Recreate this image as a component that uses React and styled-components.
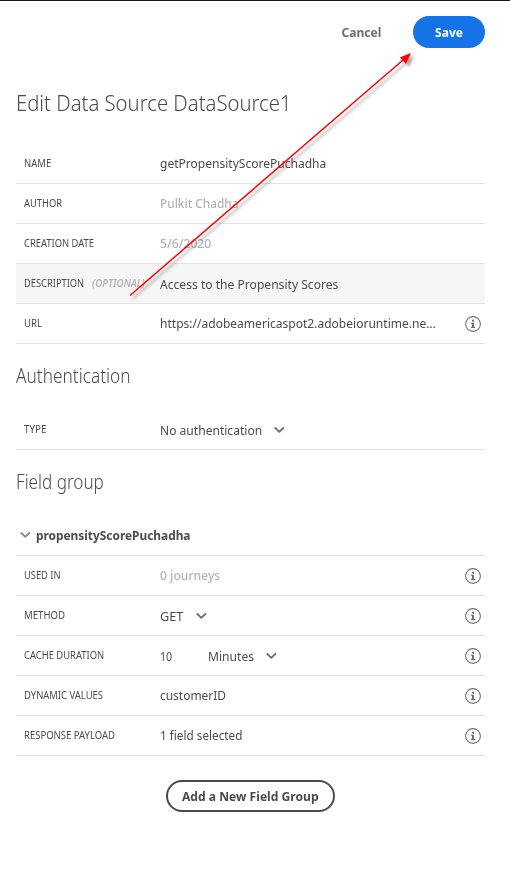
import React from 'react';
import styled, { createGlobalStyle, css } from 'styled-components';

const GlobalStyle = createGlobalStyle`
  * { box-sizing: border-box; }
  body {
    margin: 0;
    background: #fff;
    color: #4b4b4b;
    font-family: "Noto Sans", "Open Sans", sans-serif;
    font-size: 13px;
  }
`;

const Panel = styled.main`
  position: relative;
  width: 510px;
  height: 887px;
  padding: 15px 25px 0 16px;
  border-top: 1px solid #1c1a1c;
  overflow: hidden;
  white-space: nowrap;
`;

/* Condensed text: $fit is the horizontal ratio of the natural glyph width. */
const Text = styled.span`
  display: inline-block;
  transform: scaleX(${(p) => p.$fit || 0.926});
  transform-origin: ${(p) => (p.$center ? 'center' : 'left')};
`;

const Toolbar = styled.header`
  display: flex;
  justify-content: flex-end;
  align-items: center;
  gap: 10px;
  height: 32px;
`;

const buttonBase = css`
  display: flex;
  align-items: center;
  justify-content: center;
  height: 32px;
  padding: 0;
  border-radius: 16px;
  font-family: inherit;
  font-size: 13px;
  font-weight: 700;
  white-space: nowrap;
`;

const QuietButton = styled.button`
  ${buttonBase}
  width: 84px;
  border: 0;
  background: transparent;
  color: #6e6e6e;
`;

const PrimaryButton = styled.button`
  ${buttonBase}
  width: 72px;
  border: 0;
  background: #1473e6;
  color: #fff;
`;

const OutlineButton = styled.button`
  ${buttonBase}
  width: 169px;
  margin: 24px auto 0 150px;
  border: 2px solid #4b4b4b;
  background: #fff;
  color: #4b4b4b;
`;

const Title = styled.h1`
  display: flex;
  align-items: center;
  height: 40px;
  margin: 34px 0 22px;
  font-size: 22.5px;
  font-weight: 300;
`;

const Heading = styled.h2`
  display: flex;
  align-items: center;
  height: 30px;
  margin: 16px 0 20px;
  font-size: 19.5px;
  font-weight: 300;
`;

const Row = styled.div`
  display: grid;
  grid-template-columns: 136px 1fr 16px;
  align-items: center;
  height: 40px;
  padding: 0 4px 0 8px;
  border-bottom: 1px solid #e4e4e4;
  background: ${(p) => (p.$active ? '#f6f6f6' : 'transparent')};
`;

const Label = styled.div`
  display: flex;
  padding-bottom: 1px;
  font-size: 10px;
  line-height: 16px;
  color: #4b4b4b;
`;

const LabelName = styled.div`
  width: ${(p) => (p.$wide ? '67.5px' : 'auto')};
`;

const Optional = styled.em`
  font-weight: 600;
  color: #b3b3b3;
`;

const Value = styled.div`
  display: flex;
  align-items: center;
  line-height: 18px;
  padding-bottom: ${(p) => (p.$low ? '0' : '1px')};
  font-weight: ${(p) => (p.$muted ? 500 : 400)};
  color: ${(p) => (p.$muted ? '#b3b3b3' : '#4b4b4b')};
`;

const Slot = styled.div`
  flex: none;
  width: ${(p) => p.$width}px;
`;

const GroupHeader = styled.div`
  display: flex;
  align-items: center;
  gap: 5px;
  height: 40px;
  padding: 0 0 1px 4px;
  border-bottom: 1px solid #e4e4e4;
  font-weight: 700;
`;

const Icon = styled.svg`
  display: block;
  flex: none;
  fill: none;
`;

const ArrowLayer = styled.svg`
  position: absolute;
  left: 0;
  top: -1px;
  pointer-events: none;
`;

const Chevron = ({ color = '#6e6e6e' }) => (
  <Icon width="11" height="8" viewBox="0 0 11 8" stroke={color} strokeWidth="1.8" strokeLinecap="round" strokeLinejoin="round">
    <path d="M1.3 2 5.3 5.9 9.3 2" />
  </Icon>
);

const Info = () => (
  <Icon width="16" height="16" viewBox="0 0 16 16">
    <circle cx="8" cy="8" r="7.4" stroke="#747474" strokeWidth="1.1" />
    <circle cx="8" cy="4.7" r="1.15" fill="#6e6e6e" />
    <path d="M6.2 6.7H9v4.1h1V12H6v-1.2h1V7.9h-.8Z" fill="#6e6e6e" />
  </Icon>
);

const Field = ({ label, fit, active, optional, info, muted, low, children }) => (
  <Row $active={active}>
    <Label>
      <LabelName $wide={optional}><Text $fit={fit}>{label}</Text></LabelName>
      {optional && <Optional><Text $fit={0.975}>(OPTIONAL)</Text></Optional>}
    </Label>
    <Value $muted={muted} $low={low}>{children}</Value>
    {info && <Info />}
  </Row>
);

export default function App() {
  return (
    <>
      <GlobalStyle />
      <Panel>
        <Toolbar>
          <QuietButton><Text $center $fit={0.932}>Cancel</Text></QuietButton>
          <PrimaryButton><Text $center $fit={0.928}>Save</Text></PrimaryButton>
        </Toolbar>

        <Title><Text $fit={0.901}>Edit Data Source DataSource1</Text></Title>
        <Field label="NAME" fit={0.95}><Text>getPropensityScorePuchadha</Text></Field>
        <Field label="AUTHOR" fit={0.935} muted><Text $fit={0.911}>Pulkit Chadha</Text></Field>
        <Field label="CREATION DATE" fit={0.938} muted><Text $fit={0.94}>5/6/2020</Text></Field>
        <Field label="DESCRIPTION" fit={0.93} active optional low><Text $fit={0.93}>Access to the Propensity Scores</Text></Field>
        <Field label="URL" fit={0.96} info><Text>https://adobeamericaspot2.adobeioruntime.ne…</Text></Field>

        <Heading><Text $fit={0.886}>Authentication</Text></Heading>
        <Field label="TYPE" fit={0.98} low>
          <Slot $width={113.5}><Text $fit={0.928}>No authentication</Text></Slot>
          <Chevron />
        </Field>

        <Heading><Text $fit={0.876}>Field group</Text></Heading>
        <GroupHeader>
          <Chevron color="#8a8a8a" />
          <Text $fit={0.914}>propensityScorePuchadha</Text>
        </GroupHeader>
        <Field label="USED IN" fit={0.93} info muted><Text $fit={0.935}>0 journeys</Text></Field>
        <Field label="METHOD" fit={0.96} info low>
          <Slot $width={35.5}><Text $fit={0.98}>GET</Text></Slot>
          <Chevron />
        </Field>
        <Field label="CACHE DURATION" fit={0.94} info low>
          <Slot $width={48}><Text $fit={0.82}>10</Text></Slot>
          <Slot $width={57.5}><Text $fit={0.93}>Minutes</Text></Slot>
          <Chevron />
        </Field>
        <Field label="DYNAMIC VALUES" fit={0.943} info><Text $fit={0.919}>customerID</Text></Field>
        <Field label="RESPONSE PAYLOAD" fit={0.951} info><Text $fit={0.903}>1 field selected</Text></Field>

        <OutlineButton><Text $center $fit={0.932}>Add a New Field Group</Text></OutlineButton>

        <ArrowLayer width="510" height="320" viewBox="0 0 510 320" fill="none">
          <defs>
            <filter id="arrow-shadow" x="-10%" y="-10%" width="120%" height="120%">
              <feDropShadow dx="3" dy="3" stdDeviation="1.6" floodColor="#000" floodOpacity="0.35" />
            </filter>
          </defs>
          <g filter="url(#arrow-shadow)">
            <path d="M130 295.5 403 60" stroke="#f00" strokeWidth="1.5" />
            <path d="M411 53 400 57.3 406 64Z" fill="#f00" />
          </g>
        </ArrowLayer>
      </Panel>
    </>
  );
}
